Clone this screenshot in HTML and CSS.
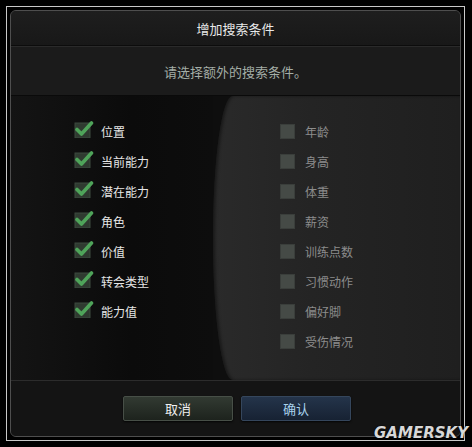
FILE: index.html
```html
<!DOCTYPE html>
<html>
<head>
<meta charset="utf-8">
<link rel="stylesheet" href="styles.css">
</head>
<body>
<div class="frame">
  <div class="panel">
    <div class="header">增加搜索条件</div>
    <div class="subtitle">请选择额外的搜索条件。</div>
    <div class="content">
      <div class="col col-left">
        <div class="row on"><svg class="cb" viewBox="0 0 20 18" width="20" height="18"><rect x="1" y="3" width="15" height="15" fill="#2f3a30" stroke="#3d4a3e"/><path d="M3 9.5 L7.5 14 L17.5 3" fill="none" stroke="#4fa45a" stroke-width="3.6" stroke-linecap="round" stroke-linejoin="round"/></svg><span>位置</span></div>
        <div class="row on"><svg class="cb" viewBox="0 0 20 18" width="20" height="18"><rect x="1" y="3" width="15" height="15" fill="#2f3a30" stroke="#3d4a3e"/><path d="M3 9.5 L7.5 14 L17.5 3" fill="none" stroke="#4fa45a" stroke-width="3.6" stroke-linecap="round" stroke-linejoin="round"/></svg><span>当前能力</span></div>
        <div class="row on"><svg class="cb" viewBox="0 0 20 18" width="20" height="18"><rect x="1" y="3" width="15" height="15" fill="#2f3a30" stroke="#3d4a3e"/><path d="M3 9.5 L7.5 14 L17.5 3" fill="none" stroke="#4fa45a" stroke-width="3.6" stroke-linecap="round" stroke-linejoin="round"/></svg><span>潜在能力</span></div>
        <div class="row on"><svg class="cb" viewBox="0 0 20 18" width="20" height="18"><rect x="1" y="3" width="15" height="15" fill="#2f3a30" stroke="#3d4a3e"/><path d="M3 9.5 L7.5 14 L17.5 3" fill="none" stroke="#4fa45a" stroke-width="3.6" stroke-linecap="round" stroke-linejoin="round"/></svg><span>角色</span></div>
        <div class="row on"><svg class="cb" viewBox="0 0 20 18" width="20" height="18"><rect x="1" y="3" width="15" height="15" fill="#2f3a30" stroke="#3d4a3e"/><path d="M3 9.5 L7.5 14 L17.5 3" fill="none" stroke="#4fa45a" stroke-width="3.6" stroke-linecap="round" stroke-linejoin="round"/></svg><span>价值</span></div>
        <div class="row on"><svg class="cb" viewBox="0 0 20 18" width="20" height="18"><rect x="1" y="3" width="15" height="15" fill="#2f3a30" stroke="#3d4a3e"/><path d="M3 9.5 L7.5 14 L17.5 3" fill="none" stroke="#4fa45a" stroke-width="3.6" stroke-linecap="round" stroke-linejoin="round"/></svg><span>转会类型</span></div>
        <div class="row on"><svg class="cb" viewBox="0 0 20 18" width="20" height="18"><rect x="1" y="3" width="15" height="15" fill="#2f3a30" stroke="#3d4a3e"/><path d="M3 9.5 L7.5 14 L17.5 3" fill="none" stroke="#4fa45a" stroke-width="3.6" stroke-linecap="round" stroke-linejoin="round"/></svg><span>能力值</span></div>
      </div>
      <div class="col col-right">
        <div class="row off"><i class="box"></i><span>年龄</span></div>
        <div class="row off"><i class="box"></i><span>身高</span></div>
        <div class="row off"><i class="box"></i><span>体重</span></div>
        <div class="row off"><i class="box"></i><span>薪资</span></div>
        <div class="row off"><i class="box"></i><span>训练点数</span></div>
        <div class="row off"><i class="box"></i><span>习惯动作</span></div>
        <div class="row off"><i class="box"></i><span>偏好脚</span></div>
        <div class="row off"><i class="box"></i><span>受伤情况</span></div>
      </div>
    </div>
    <div class="footer">
      <button class="btn cancel">取消</button>
      <button class="btn ok">确认</button>
    </div>
  </div>
  <div class="watermark">GAMERSKY</div>
</div>
</body>
</html>
```

FILE: styles.css
```css
html, body {
  margin: 0;
  padding: 0;
  background: #000;
}
body {
  width: 472px;
  height: 447px;
  overflow: hidden;
  font-family: "Noto Sans CJK SC", "Noto Sans", sans-serif;
  padding-top: 6px;
  box-sizing: border-box;
}
.frame {
  position: relative;
  margin: 0 6px 0 6px;
  width: 459px;
  height: 435px;
  box-sizing: border-box;
  border: 1px solid #c8c8c8;
  padding: 3px;
  background: #000;
}
.panel {
  height: 427px;
  box-sizing: border-box;
  border: 1px solid #4e4e4e;
  border-radius: 6px;
  background: #1a1a1a;
  display: flex;
  flex-direction: column;
  overflow: hidden;
}
.header {
  height: 34px;
  flex: none;
  display: flex;
  align-items: center;
  justify-content: center;
  color: #e8e8e8;
  font-size: 13px;
  background: linear-gradient(#1e1e1e, #181818);
  border-bottom: 1px solid #0c0c0c;
  box-shadow: 0 1px 0 #2c2c2c;
}
.subtitle {
  height: 48px;
  flex: none;
  display: flex;
  align-items: center;
  justify-content: center;
  color: #a3ada6;
  font-size: 13px;
  background: #1b1b1b;
  border-top: 1px solid #2a2a2a;
  border-bottom: 1px solid #0a0a0a;
}
.content {
  flex: 1;
  display: flex;
  background: #0e0e0e;
  border-bottom: 1px solid #2c2c2c;
}
.col {
  display: flex;
  flex-direction: column;
  padding-top: 20px;
}
.col-left {
  width: 202px;
  padding-left: 64px;
  box-sizing: border-box;
  background: linear-gradient(90deg, #141414, #0b0b0b 60%, #0d0d0d);
}
.col-right {
  flex: 1;
  padding-left: 67px;
  background: linear-gradient(90deg, #2a2a2a, #242424 40%, #1f1f1f);
  border-top-left-radius: 20px 145px;
  border-bottom-left-radius: 20px 145px;
  box-shadow: inset 2px 0 3px rgba(0,0,0,0.4);
}
.row {
  height: 30px;
  display: flex;
  align-items: center;
  font-size: 12px;
}
.row .cb {
  margin-left: -1px;
  margin-top: -4px;
  margin-right: 7px;
  flex: none;
}
.on span {
  color: #e6e6e6;
}
.off span {
  color: #8c8c8c;
}
.box {
  display: block;
  width: 15px;
  height: 15px;
  background: #454a46;
  border: 1px solid #3a3e3b;
  box-sizing: border-box;
  margin-right: 10px;
  flex: none;
}
.footer {
  height: 55px;
  flex: none;
  display: flex;
  justify-content: center;
  align-items: flex-start;
  gap: 8px;
  padding-top: 15px;
  padding-left: 3px;
  box-sizing: border-box;
  background: #141414;
}
.btn {
  width: 110px;
  height: 25px;
  font-family: inherit;
  font-size: 13px;
  border-radius: 2px;
  padding: 0;
  box-shadow: 0 1px 2px rgba(0,0,0,0.8);
}
.cancel {
  color: #f0f0f0;
  background: linear-gradient(#323a32, #1d231d);
  border: 1px solid #474f47;
}
.ok {
  color: #a8d2ec;
  background: linear-gradient(#24344a, #172233);
  border: 1px solid #35465c;
}
.watermark {
  position: absolute;
  right: -4px;
  bottom: -2px;
  font-family: "DejaVu Sans", sans-serif;
  font-weight: bold;
  font-style: italic;
  font-size: 15px;
  letter-spacing: 0px;
  color: #d8d8d8;
  text-shadow: 0 0 2px #000;
}
```
